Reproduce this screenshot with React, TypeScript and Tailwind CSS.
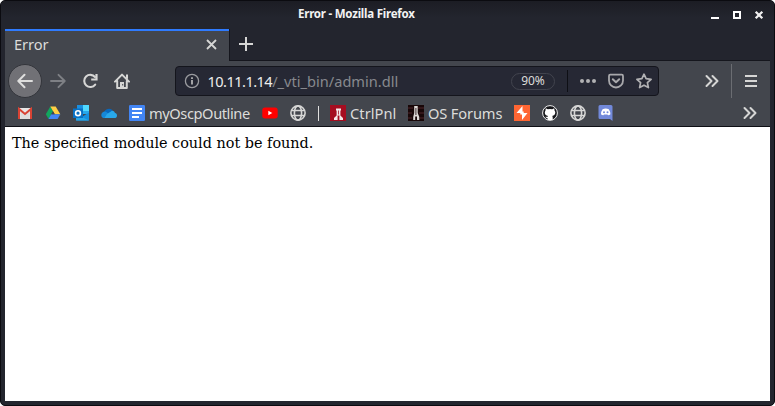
import React from "react";

type IconProps = { children: React.ReactNode; className?: string };

function Icon({ children, className = "" }: IconProps) {
  return (
    <svg width="16" height="16" viewBox="0 0 16 16" fill="none" className={"block shrink-0 " + className}>
      {children}
    </svg>
  );
}

function Globe() {
  return (
    <Icon>
      <g stroke="#d6d6d5" strokeWidth="1.6">
        <circle cx="8" cy="8" r="7.1" />
        <ellipse cx="8" cy="8" rx="3.6" ry="7.1" />
        <path d="M1.5 5.5h13M1.5 10.5h13" strokeWidth="1.3" />
      </g>
    </Icon>
  );
}

function Chevrons() {
  return (
    <Icon>
      <path d="M2.5 3l5 5-5 5M8.5 3l5 5-5 5" stroke="#d6d6d5" strokeWidth="2" strokeLinecap="round" strokeLinejoin="round" />
    </Icon>
  );
}

function TitleBar() {
  return (
    <div className="flex h-[28px] shrink-0 items-center bg-gradient-to-b from-[#1c1d24] to-[#23252e] to-60%">
      <div className="w-[297px]" />
      <div className="w-[130px] whitespace-nowrap pb-[2px] font-['Noto_Sans'] text-[11.5px] leading-[16px] font-bold tracking-[-0.22px] text-[#f2f2f2]">
        Error - Mozilla Firefox
      </div>
      <svg width="60" height="12" viewBox="0 0 60 12" className="mb-[2px] ml-auto mr-[6px]" shapeRendering="crispEdges">
        <path d="M3 9h8v2H3z" fill="#fff" />
        <path d="M26 4h6v6h-6z" stroke="#fff" strokeWidth="2" fill="none" />
        <path d="M47.7 3.7l6.6 6.6M54.3 3.7l-6.6 6.6" stroke="#f0f0f0" strokeWidth="2.3" shapeRendering="auto" />
      </svg>
    </div>
  );
}

function Tabs() {
  return (
    <div className="flex h-[32px] shrink-0 pl-[4px] pr-[4px]">
      <div className="flex h-[32px] w-[224px] items-center justify-between border-t-2 border-[#2f7bff] bg-[#43464d] pl-[9px] pr-[12px]">
        <span className="pb-[5px] text-[14.67px] leading-[20px] tracking-[-0.1px] text-[#dcdcda]">Error</span>
        <svg width="11" height="11" viewBox="0 0 11 11" className="mb-[3px]">
          <path d="M1 1l9 9M10 1l-9 9" stroke="#d6d6d5" strokeWidth="1.8" />
        </svg>
      </div>
      <div className="flex flex-1 items-center border-b border-l border-[#15161d] pb-px pl-[9px]">
        <svg width="14" height="14" viewBox="0 0 14 14">
          <path d="M7 0v14M0 7h14" stroke="#d6d6d5" strokeWidth="2" />
        </svg>
      </div>
    </div>
  );
}

function AddressBar() {
  return (
    <div className="flex h-[30px] w-[484px] items-center rounded-[4px] border border-[#14151c] bg-[#262834] pl-[8px] pr-[6px]">
      <Icon>
        <circle cx="8" cy="8" r="6.6" stroke="#9a9b9f" strokeWidth="1.3" />
        <path d="M8 7v4.6M8 4.2v1.7" stroke="#b1b1b3" strokeWidth="1.8" />
      </Icon>
      <span className="ml-[7.5px] whitespace-nowrap text-[14.6px] leading-[20px] text-[#87888e]">
        <span className="tracking-[-0.55px] text-[#eeeeec]">10.11.1.14</span>
        <span className="tracking-[0px]">/_vti_bin/admin.dll</span>
      </span>
      <span className="ml-auto flex h-[17px] w-[44px] items-center justify-center rounded-full border border-[#42444e] text-[12px] leading-[14px] tracking-[-0.1px] text-[#dcdcda]">
        90%
      </span>
      <span className="ml-[12px] h-[22px] w-px bg-[#0e0f15]" />
      <Icon className="ml-[12px]">
        <g fill="#b1b1b3">
          <circle cx="2" cy="8" r="2" />
          <circle cx="8" cy="8" r="2" />
          <circle cx="14" cy="8" r="2" />
        </g>
      </Icon>
      <Icon className="ml-[12px]">
        <path d="M2.2 1.7h11.6q1.2 0 1.2 1.2v4.6a7 7 0 0 1-14 0V2.9q0-1.2 1.2-1.2z" stroke="#a8a8ab" strokeWidth="1.8" />
        <path d="M4.8 6.2L8 9.2l3.2-3" stroke="#a8a8ab" strokeWidth="2" strokeLinecap="round" strokeLinejoin="round" />
      </Icon>
      <Icon className="ml-[12px]">
        <path d="M8 1.2l2.1 4.5 5 .6-3.7 3.4 1 4.9L8 12.2l-4.4 2.4 1-4.9L.9 6.3l5-.6z" stroke="#b1b1b3" strokeWidth="1.7" strokeLinejoin="round" />
      </Icon>
    </div>
  );
}

function NavBar() {
  return (
    <div className="flex h-[40px] items-center pl-[4px]">
      <div className="-ml-px flex size-[34px] items-center justify-center rounded-full border border-[#33353b] bg-[#717176]">
        <Icon>
          <path d="M15 8H1.5M7.5 1.8L1.3 8l6.2 6.2" stroke="#dededd" strokeWidth="2" strokeLinecap="round" strokeLinejoin="round" />
        </Icon>
      </div>
      <Icon className="ml-[8px]">
        <path d="M1 8h13.5M8.5 1.8L14.7 8l-6.2 6.2" stroke="#7e8085" strokeWidth="1.9" strokeLinecap="round" strokeLinejoin="round" />
      </Icon>
      <Icon className="ml-[16px]">
        <path d="M13 4A6.1 6.1 0 1 0 13.2 11.6" stroke="#d6d6d5" strokeWidth="2.1" strokeLinecap="round" />
        <path d="M15.6 1v6.4H9.2V5.6h4.2V1z" fill="#d6d6d5" />
      </Icon>
      <Icon className="ml-[16px]">
        <path d="M1 8.6L8 1.6l7 7M3.2 8v7h9.6V8" stroke="#d6d6d5" strokeWidth="2" strokeLinecap="round" strokeLinejoin="round" />
        <path d="M12 1.5h2v5l-2-2z" fill="#d6d6d5" />
        <path d="M6 9h4v6H6z" fill="#d6d6d5" />
        <path d="M8.2 11h1v1.6h-1z" fill="#43464d" />
      </Icon>
      <div className="ml-[45px]">
        <AddressBar />
      </div>
      <div className="ml-[45px]">
        <Chevrons />
      </div>
      <div className="ml-[11px] h-[34px] w-px bg-[#6b6d72]" />
      <Icon className="ml-[11px]">
        <path d="M2 3h12M2 8h12M2 13h12" stroke="#d6d6d5" strokeWidth="2" />
      </Icon>
    </div>
  );
}

function BookmarkLabel({ text, className }: { text: string; className: string }) {
  return <span className={"ml-[4px] whitespace-nowrap pb-px text-[14.67px] leading-[20px] text-[#dcdcda] " + className}>{text}</span>;
}

function Bookmarks() {
  return (
    <div className="flex h-[25px] items-center gap-[12px] pb-[1px] pl-[12px] pr-[12px]">
      <Icon>
        <path d="M1 3h14v11H1z" fill="#e8e6e6" />
        <path d="M3.5 6.5L8 10l4.5-3.5V14h-9z" fill="#dedcdc" />
        <path d="M2 14V4l6 5 6-5v10" stroke="#d94334" strokeWidth="2" />
      </Icon>
      <Icon>
        <path d="M5.3 1.5L8 6.2 3.5 14 .8 9.3z" fill="#11a65e" />
        <path d="M5.3 1.5h5.4l4.6 7.8H9.8z" fill="#ffcf45" />
        <path d="M6.2 9.3h9.1L12.6 14H3.5z" fill="#4386f5" />
        <path d="M8 6.2l1.8 3.1H6.2z" fill="#43464d" />
      </Icon>
      <Icon>
        <path d="M4 0h12v9H4z" fill="#28a8ea" />
        <path d="M10 0h6v6h-6z" fill="#50d9ff" />
        <path d="M4 0h6v5H4z" fill="#1a8fe0" />
        <path d="M3 15.5L16 7.5v8z" fill="#1490df" />
        <path d="M3 9l13 6.5H3z" fill="#28a8ea" />
        <path d="M0 3.5h10v9.5H0z" fill="#0871c5" />
        <circle cx="5" cy="8.2" r="2.4" stroke="#fff" strokeWidth="1.6" />
      </Icon>
      <Icon>
        <path d="M3 8a5 5 0 0 1 9-2l1.5 4L2 12z" fill="#0869be" />
        <path d="M.3 10.2A3.5 3.5 0 0 1 5 6.7l8 6.3H3.3A3 3 0 0 1 .3 10.2z" fill="#1688d8" />
        <path d="M6 9l5-3.2c2 0 2.6 1.2 2.8 2C15.3 8.2 16 9.2 16 10.4A2.7 2.7 0 0 1 13.3 13H3.5z" fill="#28a8ea" />
      </Icon>
      <div className="flex w-[121px] items-center">
        <Icon>
          <rect width="16" height="16" rx="1.3" fill="#4285f4" />
          <path d="M3 4h10M3 8h10M3 12h7" stroke="#fff" strokeWidth="1.9" />
        </Icon>
        <BookmarkLabel text="myOscpOutline" className="tracking-[-0.43px]" />
      </div>
      <Icon>
        <rect x=".3" y="2.6" width="15.4" height="10.8" rx="2.7" fill="#f00" />
        <path d="M6.3 5.8v4.4L10.3 8z" fill="#fff" />
      </Icon>
      <Globe />
      <span className="-mr-px h-[15px] w-px bg-[#e0e0df]" />
      <div className="flex w-[66px] items-center">
        <Icon>
          <path d="M0 0h16v16H0z" fill="#a50d20" />
          <path d="M6 3.5h5v2h-.6v5l2.6 2.5v2H9.4v-4.5H7.6V15H4v-2l2.6-2.5v-5H6z" fill="#f5e8e9" />
          <path d="M8 5.5h1v4H8z" fill="#b24050" />
        </Icon>
        <BookmarkLabel text="CtrlPnl" className="tracking-[0.05px]" />
      </div>
      <div className="flex w-[94px] items-center">
        <Icon>
          <path d="M0 0h16v16H0z" fill="#180708" />
          <path d="M0 3h5M10 3h6M0 8h4M11 8h5M0 13h4M12 13h4" stroke="#3d1c1f" strokeWidth="1.5" />
          <path d="M6.2 1h3.5v7l1.6 4v3H9v-3.5H7.2V15H5.2v-3l1-4z" fill="#ddd8d5" />
          <path d="M7.4 3h1v7h-1z" fill="#413132" />
        </Icon>
        <BookmarkLabel text="OS Forums" className="tracking-[-0.15px]" />
      </div>
      <Icon>
        <path d="M0 0h16v16H0z" fill="#ff6633" />
        <path d="M8.5 1L2.5 8h3.8v1.5H8V15l5.5-7H9.7V6.5H8.5z" fill="#fff" />
      </Icon>
      <Icon>
        <circle cx="8" cy="8" r="7.4" fill="#15161a" stroke="#eee" strokeWidth="1" />
        <path d="M3.7 3.2l2.1 1.1q2.2-.6 4.4 0l2.1-1.1.2 2.2q1 1.1.8 2.7-.2 2.4-3.1 2.8.6.6.5 1.7V15H5.5v-2Q4 13.2 3.3 11.8q1.1-.2 2.2.2 0-.7.5-1.1-3-.4-3.2-2.8-.1-1.6.7-2.7z" fill="#fff" />
      </Icon>
      <Globe />
      <Icon>
        <path d="M2 0h11q1.5 0 1.5 1.5V16L12 14H2Q.5 14 .5 12.5v-11Q.5 0 2 0z" fill="#7289da" />
        <path d="M4.6 4.2q3.1-1.3 6.2 0 1.7 2.5 1.6 5-.8 1-2.4 1l-.6-.8H6l-.6.8q-1.6 0-2.4-1Q2.9 6.5 4.6 4.2z" fill="#fff" />
        <circle cx="6" cy="7.2" r="1" fill="#7289da" />
        <circle cx="9.5" cy="7.2" r="1" fill="#7289da" />
      </Icon>
      <div className="ml-auto">
        <Chevrons />
      </div>
    </div>
  );
}

export default function App() {
  return (
    <div className="h-[406px] w-[775px] bg-white font-['Noto_Sans',sans-serif]">
      <div className="flex h-[406px] w-[775px] flex-col overflow-hidden rounded-[5px] border border-[#0b0b10] bg-[#23252e]">
        <TitleBar />
        <Tabs />
        <div className="mx-[4px] flex h-[66px] shrink-0 flex-col border-b border-[#0e0f15] bg-[#43464d]">
          <NavBar />
          <Bookmarks />
        </div>
        <main className="mx-[4px] h-[274px] shrink-0 bg-white pl-[7px] pt-[7px] font-['DejaVu_Serif',serif] text-[14.4px] leading-[18px] text-black">
          The specified module could not be found.
        </main>
      </div>
    </div>
  );
}
